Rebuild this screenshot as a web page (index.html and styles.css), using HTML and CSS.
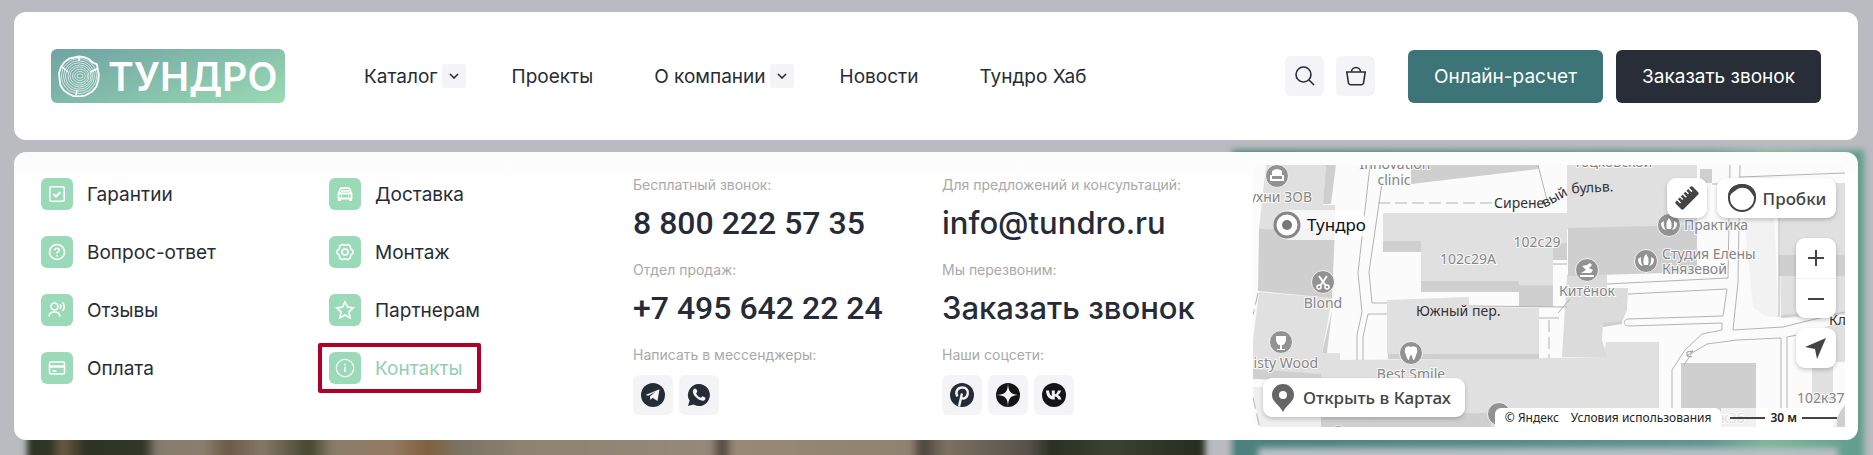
FILE: index.html
```html
<!DOCTYPE html>
<html lang="ru">
<head>
  <meta charset="utf-8">
  <meta name="viewport" content="width=device-width, initial-scale=1">
  <title>Тундро</title>
  <link rel="stylesheet" href="styles.css">
</head>
<body>
  <!-- blurred page behind the menu -->
  <div class="backdrop">
    <div class="backdrop-row">
      <div class="backdrop-photo"></div>
      <div class="backdrop-card"><div class="backdrop-inner"></div></div>
    </div>
  </div>

  <div class="page">
    <header class="header">
      <a href="#" class="logo">
        <svg width="42" height="42" viewBox="0 0 42 42" fill="none" stroke="#fff">
          <path d="M21 1.5l5 .7 5 2 4 3.500 4 1.600.5 4 1.300 6.500-.6 6-2 6-4.500 5-6 3.500-6 1.200-6-.3-5-2.500-5-3.500-3.200-5L1.500 24 1 18l2-6 3.500-5 5-3.500z" stroke-width="1.800" stroke-linejoin="round"/>
          <g stroke-width=".7">
            <ellipse cx="21" cy="21" rx="17.500" ry="17.500"/>
            <ellipse cx="21" cy="21" rx="15.500" ry="15.300"/>
            <ellipse cx="21" cy="21" rx="13.500" ry="13.200"/>
            <ellipse cx="21.500" cy="21" rx="11.500" ry="11"/>
            <ellipse cx="21.500" cy="21" rx="9.500" ry="9"/>
            <ellipse cx="22" cy="21" rx="7.500" ry="6.800"/>
            <ellipse cx="22" cy="21" rx="5.300" ry="4.500"/>
            <ellipse cx="22" cy="21" rx="3" ry="2.200"/>
          </g>
          <path d="M21 2v4M32 17l8-3.500M4 12l6 5M19 35l-1 5" stroke-width="1.500"/>
        </svg>
        <span>ТУНДРО</span>
      </a>
      <nav class="nav">
        <div class="nav-item">
          <a href="#">Каталог</a>
          <button class="nav-toggle" aria-label="Открыть каталог"><svg width="10" height="6" viewBox="0 0 10 6"><path d="M1 1l4 4 4-4"/></svg></button>
        </div>
        <div class="nav-item"><a href="#">Проекты</a></div>
        <div class="nav-item">
          <a href="#">О компании</a>
          <button class="nav-toggle" aria-label="Открыть меню компании"><svg width="10" height="6" viewBox="0 0 10 6"><path d="M1 1l4 4 4-4"/></svg></button>
        </div>
        <div class="nav-item"><a href="#">Новости</a></div>
        <div class="nav-item"><a href="#">Тундро Хаб</a></div>
      </nav>
      <div class="actions">
        <button class="icon-btn" aria-label="Поиск"><svg width="22" height="22" viewBox="0 0 22 22"><circle cx="9.500" cy="9.500" r="7.500"/><path d="M15 15l5 5"/></svg></button>
        <button class="icon-btn" aria-label="Корзина"><svg width="22" height="22" viewBox="0 0 22 22"><path d="M1.800 7h18.400l-1.700 11a2 2 0 0 1-2 1.700H5.500a2 2 0 0 1-2-1.700zM6.500 7c0-2.500 2-4.500 4.500-4.500S15.500 4.500 15.500 7"/></svg></button>
      </div>
      <div class="cta">
        <button class="btn btn-green">Онлайн-расчет</button>
        <button class="btn btn-dark">Заказать звонок</button>
      </div>
    </header>

    <section class="menu">
      <ul class="links">
        <li><a href="#"><span class="badge"><svg viewBox="0 0 20 20"><rect x="2.800" y="2.800" width="14.400" height="14.400" rx="1.500"/><path d="M6.500 10l2.500 2.500 4.500-4.500" stroke-width="2"/></svg></span>Гарантии</a></li>
        <li><a href="#"><span class="badge"><svg viewBox="0 0 20 20"><circle cx="10" cy="10" r="7.500"/><path d="M7.800 8.200c0-1.300 1-2 2.200-2s2.200.8 2.200 2c0 1.500-2.200 1.600-2.200 3.200M10 13v1.500"/></svg></span>Вопрос-ответ</a></li>
        <li><a href="#"><span class="badge"><svg viewBox="0 0 20 20"><circle cx="7.500" cy="6.500" r="3.500"/><path d="M2 16.500c.3-3 2.500-4.500 5.500-4.500s5.200 1.500 5.500 4.500M13 4.500c1 1.200 1 3 0 4.200M15.500 2.500c2.300 2.300 2.300 6 0 8.300"/></svg></span>Отзывы</a></li>
        <li><a href="#"><span class="badge"><svg viewBox="0 0 20 20"><rect x="2.500" y="4" width="15" height="12" rx="1.500"/><path d="M2.500 8.500h15" stroke-width="2.400"/><path d="M5.500 13h4"/></svg></span>Оплата</a></li>
      </ul>
      <ul class="links">
        <li><a href="#"><span class="badge"><svg viewBox="0 0 20 20"><path d="M3.500 9.500l1.500-4c.4-1 1-1.500 2-1.500h6c1 0 1.600.5 2 1.500l1.500 4v5h-13zM3 9.500h14M6 6.800h8" stroke-width="1.800"/><path d="M4.500 14v3M15.500 14v3" stroke-width="2.800"/><path d="M6 12h1M13 12h1"/></svg></span>Доставка</a></li>
        <li><a href="#"><span class="badge"><svg viewBox="0 0 20 20"><path d="M7 2.500c1.200-.3 1.500.8 3 .8s1.800-1.100 3-.8l2 1.200c.8.8 0 1.800.8 3.100s2 1.200 2.200 2.200v2c-.2 1-1.500.9-2.200 2.200s0 2.300-.8 3.100l-2 1.200c-1.200.3-1.500-.8-3-.8s-1.800 1.100-3 .8l-2-1.200c-.8-.8 0-1.800-.8-3.100S2.200 12 2 11V9c.2-1 1.500-.9 2.200-2.200s0-2.300.8-3.100z"/><circle cx="10" cy="10" r="3"/></svg></span>Монтаж</a></li>
        <li><a href="#"><span class="badge"><svg viewBox="0 0 20 20"><path d="M10 1.800l2.500 5.300 5.700.8-4.200 4 1 5.900-5-2.800-5 2.800 1-5.900-4.200-4 5.700-.8z"/></svg></span>Партнерам</a></li>
        <li class="current"><a href="#"><span class="badge"><svg viewBox="0 0 20 20"><circle cx="10" cy="10" r="8.700" stroke-width="1.200"/><path d="M10 8.700v5.300M10 5.800v1.400"/></svg></span>Контакты</a></li>
      </ul>

      <dl class="contacts">
        <dt>Бесплатный звонок:</dt>
        <dd class="phone"><a href="#">8 800 222 57 35</a></dd>
        <dt>Отдел продаж:</dt>
        <dd class="phone"><a href="#">+7 495 642 22 24</a></dd>
        <dt>Написать в мессенджеры:</dt>
        <dd class="social">
          <a href="#" aria-label="Telegram"><svg viewBox="0 0 24 24"><circle cx="12" cy="12" r="12" fill="#262c37"/><path d="M4.500 12L18.500 6.300 16.500 18l-5-3.200-2 2.200-.7-3.600 6-5-7.500 4.400z" fill="#f4f4f6"/></svg></a>
          <a href="#" aria-label="WhatsApp"><svg viewBox="0 0 24 24"><path d="M12 1a11 11 0 1 1-5.500 20.600L1 23l1.600-5.200A11 11 0 0 1 12 1z" fill="#262c37"/><path d="M7 5.800c-2 1.800-1.200 5 1.200 7.800s6.500 5 9 3.800c1.800-1 1.300-2.500 1-2.800l-2.800-1.400-1.500 1.600c-2.400-.6-4-2.200-4.800-4.500l1.300-1.500-1.200-3z" fill="#f4f4f6"/></svg></a>
        </dd>
      </dl>
      <dl class="contacts">
        <dt>Для предложений и консультаций:</dt>
        <dd><a href="#">info@tundro.ru</a></dd>
        <dt>Мы перезвоним:</dt>
        <dd><a href="#">Заказать звонок</a></dd>
        <dt>Наши соцсети:</dt>
        <dd class="social">
          <a href="#" aria-label="Pinterest"><svg viewBox="0 0 24 24"><circle cx="12" cy="12" r="12" fill="#262c37"/><path d="M9 23.500l3-13M7.500 13.500C4.500 8.500 8 4.500 12.300 4.500c4.200 0 6.200 3 5.400 6.500-1 5-6 5.800-6.900 2.600" fill="none" stroke="#f4f4f6" stroke-width="2.400"/></svg></a>
          <a href="#" aria-label="Дзен"><svg viewBox="0 0 24 24"><circle cx="12" cy="12" r="12" fill="#151515"/><path d="M12 0c.3 9 2.500 11.700 12 12-9.500.3-11.700 3-12 12-.3-9-2.500-11.700-12-12 9.500-.3 11.700-3 12-12z" fill="#f4f4f6"/></svg></a>
          <a href="#" aria-label="ВКонтакте"><svg viewBox="0 0 24 24"><circle cx="12" cy="12" r="12" fill="#151515"/><path d="M4 7.500h3c.2 3 1.500 5 2.800 5.400V7.500h3v4c1.500-.3 2.500-2 3.200-4h3c-.5 2-1.600 3.500-3 4.500 1.600.8 2.800 2.300 3.500 4.500h-3.200c-.7-1.800-1.800-3-3.500-3.300v3.300C8 17 4.200 14 4 7.500z" fill="#f4f4f6"/></svg></a>
        </dd>
      </dl>

      <div class="map">
        <svg class="map-canvas" viewBox="0 0 592 262" preserveAspectRatio="xMinYMin slice">
          <rect width="592" height="262" fill="#fbfbfb"/>
          <!-- houses -->
          <g fill="#e0e0e0">
            <path d="M13 0h60l-3 40h12v24H6z"/>
            <path d="M6 127l73 6-10 55v22H0v-35z"/>
            <path d="M0 222h68v40H6z" fill="#eee"/>
            <path d="M68 188h19v7l210-2 53-1 3-15h53v85H68z"/>
            <path d="M130 48h184v30h-14v64h-34v-26h-98V76h-38z"/>
            <path d="M134 135l82-3v10l70 1v46H134z"/>
            <path d="M314 0h130v62l-130 2z"/>
            <path d="M314 110h40v13h21l-1 22-5 12-19 3-1 15 5 17h-45z" fill="#dbdbdb"/>
            <path d="M526 18h66v132l-64 3z"/>
            <path d="M487 12h33l5 140h-10l-15-10z" fill="#f2f2f2"/>
            <path d="M572 162l20-6v41h-20z"/>
            <path d="M559 200h21v35h-21z"/>
          </g>
          <g fill="#cfcfcf">
            <path d="M73 0h10l-5 39h-8z"/>
            <path d="M6 64h76l-3 69-74-7z"/>
            <path d="M79 145l-5 43h-5z"/>
            <path d="M0 204l68 5v8l-68-3z"/>
            <path d="M68 248h170v14H68z"/>
            <path d="M158 0h127v4l-127 15z"/>
            <path d="M130 76h38v11h-38zM168 116h98v11h-98zM266 120h34v22h-34zM300 78h14v17h-14zM135 189h151v5H135z"/>
            <path d="M315 63l129-3v47l-129 4zM447 4h12v14h-12zM350 158l19-2v3l-19 3z"/>
            <path d="M428 198h75v64h-75z"/>
            <path d="M526 90h66v21h-66zM528 150l40-2-40 5z"/>
            <path d="M476 250h25v12h-25z"/>
            <path d="M580 262c3-8 7-16 12-22v22z"/>
          </g>
          <!-- roads -->
          <g fill="none" stroke="#b3b3b3">
            <path d="M117 0l-12 108 4 39-5 23v25M129 18l-13 89 3 31h15M134 149h-19l-5 23v23"/>
            <path d="M285 0l9 35M216 141l98 1M286 153h20"/>
            <path d="M125 38h115M5 128L0 150M0 232l6 28M296 155v38" stroke-dasharray="12 5"/>
            <path d="M354 119l121-6 2-113M459 19h15M487 0l-2 117-5 48 50-3 20-5 42-10M487 12l105-4"/>
            <path d="M375 129l99-5-4 27-95 3c-5 1-5 6 0 7l94-3v7l-20 4-17 16-13 20v40"/>
            <path d="M431 200l8-12 15-9 30-4 44-2v70M534 243v-71l10-2M526 18v134M300 99h14M305 148l12-14"/>
            <path d="M440 186l-6 5v-4zm-6 5l5 1" stroke="#999"/>
          </g>
          <!-- places -->
          <g fill="#929292" stroke="#f4f4f4" stroke-width="1">
            <circle cx="24" cy="11" r="11.500"/>
            <circle cx="70" cy="117" r="11.500"/>
            <circle cx="28" cy="177" r="11.500"/>
            <circle cx="158" cy="188" r="11.500"/>
            <circle cx="246" cy="249" r="11.500"/>
            <circle cx="85" cy="272" r="11.500"/>
            <circle cx="416" cy="60" r="11.500"/>
            <circle cx="393" cy="96" r="11.500"/>
            <circle cx="334" cy="105" r="11.500"/>
          </g>
          <g fill="#fff">
            <path d="M19 6q5-4 10 0v5H19zM17 10h2v4h10v-4h2v6H17z"/>
            <path d="M23 171h10v4q-1 5-4 5v4h3v1h-8v-1h3v-4q-3 0-4-5z"/>
            <path d="M152 183q3-3 6-1 3-2 6 1 1 4-1 7-1 5-3 5-1-5-2-5t-2 5q-2 0-3-5-2-3-1-7z"/>
            <path d="M327 110h14v2h-14zM329 101l5-1 3-2 2 2-3 3 4 2-2 3h-10l5-3z"/>
            <path d="M416 53q4 5 2 11h-4q-2-6 2-11zM411 56q-1 5 2 9-5-1-5-7zM421 56q1 5-2 9 5-1 5-7z"/>
            <path d="M393 89q4 5 2 11h-4q-2-6 2-11zM388 92q-1 5 2 9-5-1-5-7zM398 92q1 5-2 9 5-1 5-7z"/>
          </g>
          <path d="M66 111l7 10M74 111l-7 10" stroke="#fff" stroke-width="2"/>
          <g fill="none" stroke="#fff" stroke-width="1.500"><circle cx="66" cy="122" r="2"/><circle cx="74" cy="122" r="2"/></g>
          <rect x="21" y="45" width="94" height="30" rx="15" fill="#fff" fill-opacity=".75"/>
          <circle cx="34" cy="60" r="12" fill="#fff" stroke="#858585" stroke-width="3"/>
          <circle cx="34" cy="60" r="5" fill="#777"/>

          <g class="place">
            <text x="142" y="4" text-anchor="middle">Innovation</text>
            <text x="141" y="20" text-anchor="middle">clinic</text>
            <text x="59" y="37" text-anchor="end">Кухни ЗОВ</text>
            <text x="70" y="143" text-anchor="middle">Blond</text>
            <text x="65" y="203" text-anchor="end">Misty Wood</text>
            <text x="158" y="214" text-anchor="middle">Best Smile</text>
            <text x="215" y="99" text-anchor="middle">102с29А</text>
            <text x="284" y="82" text-anchor="middle">102с29</text>
            <text x="431" y="65">Практика</text>
            <text x="409" y="94">Студия Елены</text>
            <text x="409" y="109">Князевой</text>
            <text x="334" y="131" text-anchor="middle">Китёнок</text>
            <text x="360" y="2" text-anchor="middle">Тоцковской</text>
            <text x="544" y="238">102к37</text>
            <text x="468" y="258">к36</text>
          </g>
          <g class="street">
            <path id="boulevard" d="M241 43h46q6 0 12-4l14-8q5-3 12-3l40-2" fill="none"/>
            <text><textPath href="#boulevard">Сиреневый бульв.</textPath></text>
            <text x="163" y="151">Южный пер.</text>
            <text x="576" y="160">Клин</text>
          </g>
          <text x="54" y="66" class="pin-name">Тундро</text>
        </svg>

        <div class="map-top">
          <button class="map-btn" aria-label="Линейка"><svg width="24" height="24" viewBox="0 0 24 24"><g transform="rotate(-45 12 12)"><rect x="0" y="6.500" width="24" height="11" rx="2" fill="#444"/><path d="M4 6v5M8 6v4M12 6v5M16 6v4M20 6v5" stroke="#fff" stroke-width="1.500"/></g></svg></button>
          <button class="map-btn map-traffic"><svg width="30" height="30" viewBox="0 0 30 30"><circle cx="15" cy="15" r="13" fill="none" stroke="#444" stroke-width="2"/><path d="M1 16C0 6 7 1 15 1s15 5 14 15c-3-3-4-6-7-9-4-3-10-3-14 1-4 2-5 5-7 8z" fill="#444"/></svg>Пробки</button>
        </div>
        <div class="map-side">
          <div class="map-zoom">
            <button aria-label="Приблизить"><svg width="18" height="18" viewBox="0 0 18 18"><path d="M9 1v16M1 9h16"/></svg></button>
            <button aria-label="Отдалить"><svg width="18" height="18" viewBox="0 0 18 18"><path d="M1 9h16"/></svg></button>
          </div>
          <button class="map-btn" aria-label="Моё местоположение"><svg width="22" height="22" viewBox="0 0 22 22"><path d="M21 1l-9 21-2-10L0 10z" fill="#444"/></svg></button>
        </div>
        <a href="#" class="map-open"><svg width="22" height="28" viewBox="0 0 22 28"><path d="M11 0a11 11 0 0 1 11 11c0 7-7 9-11 17C7 20 0 18 0 11A11 11 0 0 1 11 0z" fill="#666"/><circle cx="11" cy="11" r="4" fill="#fff"/></svg>Открыть в Картах</a>
        <div class="map-foot">
          <div class="map-copy"><a href="#">© Яндекс</a><a href="#">Условия использования</a></div>
          <div class="map-scale">30 м</div>
        </div>
      </div>
    </section>
  </div>
</body>
</html>
```
FILE: styles.css
```css
* {
  box-sizing: border-box;
}

body {
  margin: 0;
  background: #babbc0;
  color: #262c37;
  font-family: Inter, sans-serif;
  font-size: 19px;
}

a {
  color: inherit;
  text-decoration: none;
}

button {
  border: none;
  padding: 0;
  font: inherit;
  color: inherit;
  cursor: pointer;
}

ul, dl, dd {
  margin: 0;
  padding: 0;
  list-style: none;
}

/* page behind the menu */
.backdrop {
  position: absolute;
  top: 0;
  left: 0;
  right: 0;
  bottom: 0;
  overflow: hidden;
}

.backdrop-row {
  display: grid;
  grid-template-columns: 1178fr 632fr;
  gap: 27px;
  height: 500px;
  padding: 150px 9px 0 27px;
  filter: blur(3px);
}

.backdrop-photo {
  margin-top: 40px;
  background: linear-gradient(90deg, #2c3424 0, #303626 2%, #6d5a44 3%, #2d3222 5%, #333728 10%, #857b6c 11%, #8b7f6e 15%, #6b5a48 17%, #857866 20%, #44472f 24%, #8b7d6a 26%, #947a62 31%, #80603f 34%, #7b7466 37%, #8e8270 42%, #96897a 58%, #4c443b 59%, #978975 60%, #8f826f 75%, #4a443c 76%, #7d7161 78%, #57524a 85%, #2a3022 87%, #3c4130 92%, #272c20 100%);
}

.backdrop-card {
  padding: 298px 26px 0;
  background: linear-gradient(90deg, #4b807d 0, #5e9490 75%, #7db79b 85%, #5f9b8a 100%);
}

.backdrop-inner {
  height: 100%;
  background: #babfc4;
}

.page {
  position: relative;
  display: flex;
  flex-direction: column;
  gap: 12px;
  padding: 12px 15px 15px 14px;
}

.header,
.menu {
  background: #fff;
  border-radius: 12px;
}

.header {
  display: flex;
  align-items: center;
  height: 128px;
  padding: 0 37px;
}

.logo {
  display: flex;
  align-items: center;
  gap: 8px;
  width: 234px;
  height: 54px;
  padding-left: 7px;
  border-radius: 6px;
  background: linear-gradient(160deg, #6fa3a3, #84bdab 50%, #9adbb4);
  color: #fff;
  font-size: 39px;
  font-weight: 600;
}

.nav {
  display: flex;
  gap: 61px;
  margin-left: 79px;
}

.nav-item {
  display: flex;
  align-items: center;
  gap: 4px;
  white-space: nowrap;
}

.nav-toggle {
  width: 24px;
  height: 24px;
  margin-right: -15px;
  border-radius: 3px;
  background: #f4f4f6;
}

.nav-toggle svg,
.icon-btn svg {
  display: block;
  margin: auto;
  fill: none;
  stroke: #262c37;
  stroke-width: 1.6;
}

.actions {
  display: flex;
  gap: 12px;
  margin-left: auto;
}

.icon-btn {
  width: 39px;
  height: 40px;
  border-radius: 6px;
  background: #f4f4f6;
}

.cta {
  display: flex;
  gap: 13px;
  margin-left: 33px;
}

.btn {
  height: 53px;
  padding: 0 26px;
  border-radius: 6px;
  color: #fff;
  white-space: nowrap;
}

.btn-green {
  background: #3d7477;
}

.btn-dark {
  background: #282d37;
}

.menu {
  display: grid;
  grid-template-columns: 288fr 304fr 309fr 311fr 592fr;
  padding: 13px 13px 13px 27px;
  background: linear-gradient(#fbfbfb, #fff 36px);
}

.links {
  display: flex;
  flex-direction: column;
  gap: 26px;
  padding-top: 13px;
}

.links a {
  display: inline-flex;
  align-items: center;
  gap: 14px;
}

.links li {
  display: flex;
  height: 32px;
}

.badge {
  display: flex;
  align-items: center;
  justify-content: center;
  width: 32px;
  height: 32px;
  border-radius: 6px;
  background: #9bdab8;
}

.badge svg {
  width: 20px;
  height: 20px;
  fill: none;
  stroke: #fff;
  stroke-width: 1.6;
}

.links .current a {
  margin: -9px 0 -9px -11px;
  padding: 0 14px 0 7px;
  border: 4px solid #b0002a;
  border-radius: 2px;
  color: #8fd1ad;
}

.contacts {
  padding-top: 10px;
}

.contacts dt {
  color: #a9a9a9;
  font-size: 14px;
  line-height: 20px;
}

.contacts dd {
  height: 65px;
  padding-top: 8px;
  font-size: 31px;
  font-weight: 500;
  line-height: 40px;
  white-space: nowrap;
}

.contacts .phone {
  font-family: Roboto, sans-serif;
  font-size: 32px;
}

.contacts .social {
  display: flex;
  gap: 6px;
  height: 60px;
  padding-top: 10px;
}

.social a {
  display: flex;
  align-items: center;
  justify-content: center;
  width: 40px;
  height: 40px;
  border-radius: 6px;
  background: #f4f4f6;
}

.social svg {
  width: 24px;
  height: 24px;
}

.map {
  position: relative;
  min-height: 262px;
  overflow: hidden;
  color: #444;
  font-family: "Noto Sans", sans-serif;
}

.map-canvas {
  position: absolute;
  width: 100%;
  height: 100%;
}

.place {
  fill: #858585;
  stroke: #fafafa;
  stroke-width: 2px;
  paint-order: stroke;
  font-size: 14px;
}

.street {
  fill: #333;
  font-size: 14px;
}

.pin-name {
  fill: #111;
  font-size: 17px;
}

.map-btn,
.map-zoom,
.map-open {
  border-radius: 9px;
  background: #fff;
  box-shadow: 0 2px 4px rgba(0, 0, 0, .2);
}

.map-btn {
  display: flex;
  align-items: center;
  justify-content: center;
  width: 40px;
  height: 40px;
}

.map-top {
  position: absolute;
  top: 13px;
  right: 9px;
  display: flex;
  gap: 10px;
}

.map-traffic {
  gap: 6px;
  width: 119px;
  font-size: 17px;
  font-weight: 500;
}

.map-side {
  position: absolute;
  top: 73px;
  right: 9px;
  display: flex;
  flex-direction: column;
  gap: 10px;
}

.map-zoom {
  display: flex;
  flex-direction: column;
}

.map-zoom button {
  width: 40px;
  height: 40px;
  background: none;
}

.map-zoom button + button {
  border-top: 1px solid #eee;
}

.map-zoom svg {
  display: block;
  margin: auto;
  stroke: #444;
  stroke-width: 2;
}

.map-open {
  position: absolute;
  left: 10px;
  bottom: 10px;
  display: flex;
  align-items: center;
  gap: 9px;
  height: 39px;
  padding: 0 14px 0 9px;
  font-size: 17px;
  font-weight: 500;
}

.map-foot {
  position: absolute;
  right: 8px;
  bottom: 0;
  display: flex;
  height: 19px;
  color: #222;
  font-size: 12px;
  line-height: 19px;
  white-space: nowrap;
}

.map-copy {
  display: flex;
  gap: 12px;
  padding: 0 10px;
  border-radius: 6px 6px 0 0;
  background: #fff;
}

.map-scale {
  display: flex;
  align-items: center;
  gap: 5px;
  padding-left: 9px;
  background: rgba(255, 255, 255, .7);
  font-weight: 600;
}

.map-scale::before,
.map-scale::after {
  content: "";
  width: 35px;
  height: 2px;
  background: #444;
}
```
